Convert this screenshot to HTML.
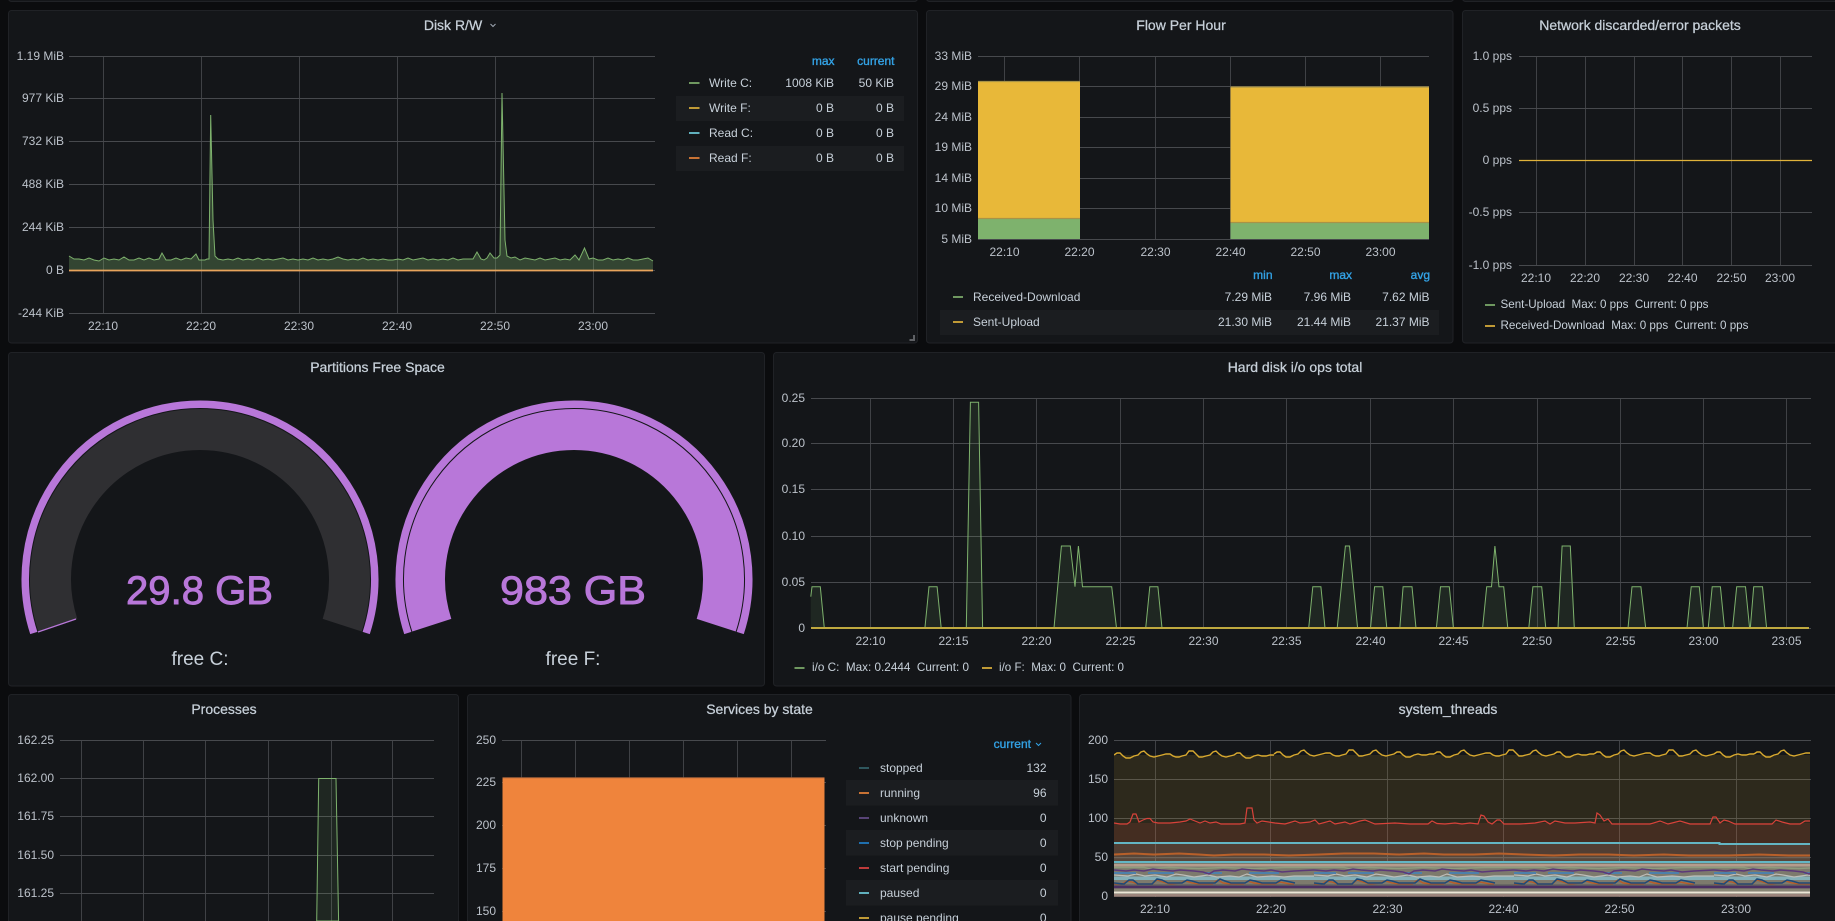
<!DOCTYPE html>
<html lang="en">
<head>
<meta charset="utf-8">
<title>Dashboard</title>
<style>
html,body{margin:0;padding:0;background:#0b0c0e;width:1835px;height:921px;overflow:hidden}
svg{display:block}
text{font-family:"Liberation Sans",sans-serif;font-size:12px;fill:#c7d0d9;white-space:pre}
.t{font-size:14px;text-anchor:middle;fill:#c7d0d9;stroke:#c7d0d9;stroke-width:.25}
.r{text-anchor:end}
.a{fill:#bcc2ca}
.ar{fill:#bcc2ca;text-anchor:end}
.m{fill:#bcc2ca;text-anchor:middle}
.h{fill:#33a2e5;text-anchor:end;stroke:#33a2e5;stroke-width:.35}
.p{fill:#141619;stroke:#202226;stroke-width:1}
.g{stroke:#47494d;stroke-width:1;fill:none}
.v{stroke:#3f4145;stroke-width:1;fill:none}
.big{font-size:40px;fill:#b877d9;text-anchor:middle;stroke:#b877d9;stroke-width:.9}
.lb{font-size:19px;fill:#c7d0d9;text-anchor:middle}
</style>
</head>
<body>
<svg width="1835" height="921" viewBox="0 0 1835 921" xmlns="http://www.w3.org/2000/svg">
<defs>
<clipPath id="tc"><rect x="1114" y="730" width="696" height="170"/></clipPath>
<path id="yw" d="M0 755l3-2 3 0 3 3 3 2 4 0 4-2 4-1l3-3 3-1 3 3 3 2 4 1 4-1 4-1l4-1 4 0 3 2 3 1 3 0 3-1 4-1l3-4 4 0 3 3 3 3 3 0 4-1 4-1l3-3 3-1 3 3 3 2 4 1 4-1 4-1l3-2 3 0 3 3 3 2 4 0 4-2 4-1l4 1 4 0 4-1 4 0" fill="none" stroke="#d8a92f" stroke-width="1.4"/>
<g id="mw" fill="none">
<path d="M0 867.5h30l5 1 20-1 30 1 25-1 30 1 30-1 30 0" stroke="#8f9c7c" stroke-width="1.5"/>
<path d="M0 875l14 1 8-2 9 2 10-1 12 2 9-3 7 1 11 2 14-2 9 2 13-1 9 1 8-3 10 3 15-1 12 1 10-1 20 0" stroke="#bdbdb8" stroke-width="1.2"/>
<path d="M0 873h22M34 873h26M90 873h18M135 873h30" stroke="#4d80aa" stroke-width="2"/>
<path d="M0 870l12 1 8-1 10 1 9-2 8 1 12 1 7-1 14 1 9 1 6 2 5-3 9-1 12 1 7-2 9 1 13 1 7-1 11 2 12-1 20-1" stroke="#5c3878" stroke-width="1.6"/>
<path d="M0 884l8 0 5-3 5 1 6 2 14 0 5-4 6 2 7 2 10-1 6-2 6 2 8 1 12 0 6-4 5 3 8 1 12 0 5-3 6 2 10 1 10 0 6-2 10 2 4 0" stroke="#b85c28" stroke-width="1.4"/>
<path d="M0 883l10 1 5-4 4 0 5 4 14 0 5-5 5 1 6 3 14 0 5-3 5 1 7 2 16 0 5-4 5 2 6 2 14 0 5-3 5 1 7 2 14 0 5-3 5 1 9 2" stroke="#1c4a7a" stroke-width="1.5"/>
<path d="M0 885h200" stroke="#55555a" stroke-width="1"/>
</g>
</defs>

<!-- top sliver panels -->
<rect class="p" x="8.5" y="-30" width="909" height="31.5" rx="3"/>
<rect class="p" x="926.5" y="-30" width="527" height="31.5" rx="3"/>
<rect class="p" x="1462.5" y="-30" width="381" height="31.5" rx="3"/>

<!-- Disk R/W -->
<rect class="p" x="8.5" y="10.5" width="909" height="332.5" rx="3"/>
<text class="t" x="453" y="30">Disk R/W</text>
<path d="M490.500 24l2.500 2.500 2.500-2.500" fill="none" stroke="#9fa7b3" stroke-width="1"/>
<path class="v" d="M103.500 56v257M201.500 56v257M299.500 56v257M397.500 56v257M495.500 56v257M593.500 56v257"/>
<path class="g" d="M69 56.500h586M69 98.500h586M69 141.500h586M69 184.500h586M69 227.500h586M69 270.500h586M69 313.500h586"/>
<path d="M69 256L74 259 79 259 84 260 89 258 94 260 99 261 104 258 109 260 114 259 119 260 124 257 129 260 134 260 139 258 144 260 149 258 154 260 159 259 162 253 166 260 171 260 176 258 181 260 186 258 191 259 196 254 199 260 205 260 207 259 209 259 210.700 115 213 220 215 256 218 259 223 260 228 259 233 260 238 258 243 260 248 259 253 260 258 258 263 260 268 259 273 260 278 259 283 258 288 260 293 259 298 260 303 259 308 260 313 258 318 260 323 259 328 260 333 259 338 257 343 259 348 260 353 259 358 260 363 258 368 260 373 259 378 260 383 259 388 260 393 260 398 259 403 260 408 258 413 260 418 259 423 258 428 260 433 259 438 260 443 259 448 260 453 258 458 260 463 259 468 259 473 259 477 252 481 259 484 260 487 258 490 253 494 258 497 258 500 255 502 93 505 240 507 256 511 258 515 257 520 260 525 258 530 259 535 260 540 258 545 260 550 259 555 258 560 260 565 259 570 260 575 255 579 260 584.500 248 589 259 593 258 598 260 603 260 608 258 613 260 618 259 623 260 628 258 633 260 638 260 643 259 648 258 653 261V270H69Z" fill="#7eb26d" fill-opacity=".3" stroke="none"/>
<path d="M69 256L74 259 79 259 84 260 89 258 94 260 99 261 104 258 109 260 114 259 119 260 124 257 129 260 134 260 139 258 144 260 149 258 154 260 159 259 162 253 166 260 171 260 176 258 181 260 186 258 191 259 196 254 199 260 205 260 207 259 209 259 210.700 115 213 220 215 256 218 259 223 260 228 259 233 260 238 258 243 260 248 259 253 260 258 258 263 260 268 259 273 260 278 259 283 258 288 260 293 259 298 260 303 259 308 260 313 258 318 260 323 259 328 260 333 259 338 257 343 259 348 260 353 259 358 260 363 258 368 260 373 259 378 260 383 259 388 260 393 260 398 259 403 260 408 258 413 260 418 259 423 258 428 260 433 259 438 260 443 259 448 260 453 258 458 260 463 259 468 259 473 259 477 252 481 259 484 260 487 258 490 253 494 258 497 258 500 255 502 93 505 240 507 256 511 258 515 257 520 260 525 258 530 259 535 260 540 258 545 260 550 259 555 258 560 260 565 259 570 260 575 255 579 260 584.500 248 589 259 593 258 598 260 603 260 608 258 613 260 618 259 623 260 628 258 633 260 638 260 643 259 648 258 653 261" fill="none" stroke="#7eb26d" stroke-width="1"/>
<path d="M69 270.500H653" stroke="#e8a45c" stroke-width="1.800"/>
<g>
<text class="ar" x="64" y="60">1.19 MiB</text><text class="ar" x="64" y="102">977 KiB</text><text class="ar" x="64" y="145">732 KiB</text><text class="ar" x="64" y="188">488 KiB</text><text class="ar" x="64" y="231">244 KiB</text><text class="ar" x="64" y="274">0 B</text><text class="ar" x="64" y="317">-244 KiB</text>
<text class="m" x="103" y="330">22:10</text><text class="m" x="201" y="330">22:20</text><text class="m" x="299" y="330">22:30</text><text class="m" x="397" y="330">22:40</text><text class="m" x="495" y="330">22:50</text><text class="m" x="593" y="330">23:00</text>
</g>
<rect x="676" y="96" width="228" height="25" fill="#1b1d20"/><rect x="676" y="146" width="228" height="25" fill="#1b1d20"/>
<text class="h" x="834.500" y="65">max</text><text class="h" x="894.500" y="65">current</text>
<rect x="689" y="82" width="10.500" height="2" fill="#6f9860"/><text x="709" y="87">Write C:</text><text class="r" x="834" y="87">1008 KiB</text><text class="r" x="894" y="87">50 KiB</text>
<rect x="689" y="107" width="10.500" height="2" fill="#c09a36"/><text x="709" y="112">Write F:</text><text class="r" x="834" y="112">0 B</text><text class="r" x="894" y="112">0 B</text>
<rect x="689" y="132" width="10.500" height="2" fill="#60b0bd"/><text x="709" y="137">Read C:</text><text class="r" x="834" y="137">0 B</text><text class="r" x="894" y="137">0 B</text>
<rect x="689" y="157" width="10.500" height="2" fill="#c87234"/><text x="709" y="162">Read F:</text><text class="r" x="834" y="162">0 B</text><text class="r" x="894" y="162">0 B</text>
<path d="M915 335v6h-5.500v-2h3.500v-4z" fill="#5f6165"/>

<!-- Flow Per Hour -->
<rect class="p" x="926.500" y="10.500" width="526.500" height="332.500" rx="3"/>
<text class="t" x="1181" y="30">Flow Per Hour</text>
<path class="v" d="M1004.500 56v183M1079.500 56v183M1155.500 56v183M1230.500 56v183M1305.500 56v183M1380.500 56v183"/>
<path class="g" d="M978 56.500h451M978 86.500h451M978 117.500h451M978 147.500h451M978 178.500h451M978 208.500h451M978 239.500h451"/>
<rect x="978" y="81" width="102" height="137.500" fill="#e8b839"/><rect x="978" y="218.500" width="102" height="20.500" fill="#7eb26d"/>
<path d="M978 81.500h102M978 218.500h102" stroke="#a89347" stroke-width="1.200"/>
<rect x="1230.500" y="86.500" width="198.500" height="136" fill="#e8b839"/><rect x="1230.500" y="222.500" width="198.500" height="16.500" fill="#7eb26d"/>
<path d="M1230.500 87h198.500M1230.500 222.500h198.500" stroke="#a89347" stroke-width="1.200"/>
<text class="ar" x="972" y="60">33 MiB</text><text class="ar" x="972" y="90">29 MiB</text><text class="ar" x="972" y="121">24 MiB</text><text class="ar" x="972" y="151">19 MiB</text><text class="ar" x="972" y="182">14 MiB</text><text class="ar" x="972" y="212">10 MiB</text><text class="ar" x="972" y="243">5 MiB</text>
<text class="m" x="1004.500" y="256">22:10</text><text class="m" x="1079.500" y="256">22:20</text><text class="m" x="1155.500" y="256">22:30</text><text class="m" x="1230.500" y="256">22:40</text><text class="m" x="1305.500" y="256">22:50</text><text class="m" x="1380.500" y="256">23:00</text>
<rect x="940" y="310" width="499" height="25" fill="#1b1d20"/>
<text class="h" x="1272.500" y="279">min</text><text class="h" x="1352" y="279">max</text><text class="h" x="1430" y="279">avg</text>
<rect x="953" y="296" width="10" height="2" fill="#6f9860"/><text x="973" y="301">Received-Download</text><text class="r" x="1272" y="301">7.29 MiB</text><text class="r" x="1351" y="301">7.96 MiB</text><text class="r" x="1429.500" y="301">7.62 MiB</text>
<rect x="953" y="321" width="10" height="2" fill="#c09a36"/><text x="973" y="326">Sent-Upload</text><text class="r" x="1272" y="326">21.30 MiB</text><text class="r" x="1351" y="326">21.44 MiB</text><text class="r" x="1429.500" y="326">21.37 MiB</text>

<!-- Network -->
<rect class="p" x="1462.500" y="10.500" width="381" height="332.500" rx="3"/>
<text class="t" x="1640" y="30">Network discarded/error packets</text>
<path class="v" d="M1536.500 56v209M1585.500 56v209M1634.500 56v209M1682.500 56v209M1731.500 56v209M1780.500 56v209"/>
<path class="g" d="M1519 56.500h293M1519 108.500h293M1519 212.500h293M1519 265.500h293"/>
<path d="M1519 160.500h293" stroke="#e0b23a" stroke-width="1.200"/>
<text class="ar" x="1512" y="60">1.0 pps</text><text class="ar" x="1512" y="112">0.5 pps</text><text class="ar" x="1512" y="164">0 pps</text><text class="ar" x="1512" y="216">-0.5 pps</text><text class="ar" x="1512" y="269">-1.0 pps</text>
<text class="m" x="1536" y="282">22:10</text><text class="m" x="1585" y="282">22:20</text><text class="m" x="1634" y="282">22:30</text><text class="m" x="1682.500" y="282">22:40</text><text class="m" x="1731.500" y="282">22:50</text><text class="m" x="1780" y="282">23:00</text>
<rect x="1485" y="304" width="10" height="2" fill="#6f9860"/><text x="1500.500" y="308" textLength="208" lengthAdjust="spacingAndGlyphs">Sent-Upload  Max: 0 pps  Current: 0 pps</text>
<rect x="1485" y="325" width="10" height="2" fill="#c09a36"/><text x="1500.500" y="329" textLength="248" lengthAdjust="spacingAndGlyphs">Received-Download  Max: 0 pps  Current: 0 pps</text>

<!-- Partitions -->
<rect class="p" x="8.500" y="352.500" width="756" height="333.500" rx="3"/>
<text class="t" x="377.500" y="372">Partitions Free Space</text>
<g fill="none">
<path d="M33.800 633A174.750 174.750 0 1 1 366.200 633" stroke="#b877d9" stroke-width="7.500"/>
<path d="M57.800 625.200A149.500 149.500 0 1 1 342.200 625.200" stroke="#2f2f32" stroke-width="41"/>
<path d="M38 632L76 619" stroke="#b877d9" stroke-width="1.200"/>
<path d="M407.800 633A174.750 174.750 0 1 1 740.200 633" stroke="#b877d9" stroke-width="7.500"/>
<path d="M431.800 625.200A149.500 149.500 0 1 1 716.200 625.200" stroke="#b877d9" stroke-width="41"/>
</g>
<text class="big" x="199.500" y="604" textLength="147" lengthAdjust="spacingAndGlyphs">29.8 GB</text>
<text class="big" x="573" y="604" textLength="146" lengthAdjust="spacingAndGlyphs">983 GB</text>
<text class="lb" x="200" y="665">free C:</text>
<text class="lb" x="573" y="665">free F:</text>

<!-- Hard disk -->
<rect class="p" x="773.500" y="352.500" width="1070" height="333.500" rx="3"/>
<text class="t" x="1295" y="372">Hard disk i/o ops total</text>
<path class="v" d="M870.500 398v230M953.500 398v230M1036.500 398v230M1120.500 398v230M1203.500 398v230M1286.500 398v230M1370.500 398v230M1453.500 398v230M1537.500 398v230M1620.500 398v230M1703.500 398v230M1786.500 398v230"/>
<path class="g" d="M811 398.500h1000M811 443.500h1000M811 489.500h1000M811 536.500h1000M811 582.500h1000M811 628.500h1000"/>
<path d="M810.800 596.700L812 586.700 820.300 586.700 824.300 628H924.900L929 586.700 937.100 586.700 941.200 628H966.300L970.400 402.300 978.600 402.300 982.600 628H1054L1061.400 546 1070.300 546 1075 586.700 1078.400 546 1082.500 586.700 1111.700 586.700 1116.500 628H1145.700L1149.800 586.700 1157.900 586.700 1162 628H1308.700L1312.800 586.700 1320.900 586.700 1325 628H1337.200L1345.400 546 1349.500 546 1357.600 628H1370.500L1374.600 586.700 1382.800 586.700 1386.800 628H1399.800L1403.100 586.700 1412 586.700 1416 628H1436.400L1440.500 586.700 1449.300 586.700 1453.400 628H1482.600L1486.700 586.700 1491.500 586.700 1494.900 546 1499 586.700 1503.700 586.700 1507.800 628H1528.800L1532.900 586.700 1541.700 586.700 1545.800 628H1558L1562.100 546 1570.300 546 1574.300 628H1628L1632 586.700 1640.900 586.700 1645.700 628H1687L1691.200 586.700 1699.300 586.700 1703.400 628H1708.200L1712.200 586.700 1720.400 586.700 1724.500 628H1732.600L1736.700 586.700 1745.500 586.700 1749.600 628H1750.300L1753.700 586.700 1762.500 586.700 1766.600 628H810.800Z" fill="#7eb26d" fill-opacity=".11"/>
<path d="M810.800 596.700L812 586.700 820.300 586.700 824.300 628H924.900L929 586.700 937.100 586.700 941.200 628H966.300L970.400 402.300 978.600 402.300 982.600 628H1054L1061.400 546 1070.300 546 1075 586.700 1078.400 546 1082.500 586.700 1111.700 586.700 1116.500 628H1145.700L1149.800 586.700 1157.900 586.700 1162 628H1308.700L1312.800 586.700 1320.900 586.700 1325 628H1337.200L1345.400 546 1349.500 546 1357.600 628H1370.500L1374.600 586.700 1382.800 586.700 1386.800 628H1399.800L1403.100 586.700 1412 586.700 1416 628H1436.400L1440.500 586.700 1449.300 586.700 1453.400 628H1482.600L1486.700 586.700 1491.500 586.700 1494.900 546 1499 586.700 1503.700 586.700 1507.800 628H1528.800L1532.900 586.700 1541.700 586.700 1545.800 628H1558L1562.100 546 1570.300 546 1574.300 628H1628L1632 586.700 1640.900 586.700 1645.700 628H1687L1691.200 586.700 1699.300 586.700 1703.400 628H1708.200L1712.200 586.700 1720.400 586.700 1724.500 628H1732.600L1736.700 586.700 1745.500 586.700 1749.600 628H1750.300L1753.700 586.700 1762.500 586.700 1766.600 628" fill="none" stroke="#7eb26d" stroke-width="1"/>
<path d="M811 628H1809" stroke="#bfa93f" stroke-width="2"/>
<text class="ar" x="805" y="402">0.25</text><text class="ar" x="805" y="447">0.20</text><text class="ar" x="805" y="493">0.15</text><text class="ar" x="805" y="540">0.10</text><text class="ar" x="805" y="586">0.05</text><text class="ar" x="805" y="632">0</text>
<text class="m" x="870.500" y="645">22:10</text><text class="m" x="953.500" y="645">22:15</text><text class="m" x="1036.500" y="645">22:20</text><text class="m" x="1120.500" y="645">22:25</text><text class="m" x="1203.500" y="645">22:30</text><text class="m" x="1286.500" y="645">22:35</text><text class="m" x="1370.500" y="645">22:40</text><text class="m" x="1453.500" y="645">22:45</text><text class="m" x="1537" y="645">22:50</text><text class="m" x="1620.500" y="645">22:55</text><text class="m" x="1703.500" y="645">23:00</text><text class="m" x="1786.500" y="645">23:05</text>
<rect x="794.500" y="667" width="10" height="2" fill="#6f9860"/><text x="812" y="671" textLength="157" lengthAdjust="spacingAndGlyphs">i/o C:  Max: 0.2444  Current: 0</text>
<rect x="982" y="667" width="10" height="2" fill="#c09a36"/><text x="999" y="671" textLength="125" lengthAdjust="spacingAndGlyphs">i/o F:  Max: 0  Current: 0</text>

<!-- Processes -->
<rect class="p" x="8.500" y="694.500" width="450" height="260" rx="3"/>
<text class="t" x="224" y="714">Processes</text>
<path class="v" d="M81.500 740v190M143.500 740v190M205.500 740v190M268.500 740v190M331.500 740v190M392.500 740v190"/>
<path class="g" d="M60 740.500h374M60 778.500h374M60 816.500h374M60 855.500h374M60 893.500h374"/>
<path d="M316.700 921L318.700 778.500H336L338.600 921Z" fill="#7eb26d" fill-opacity=".11" stroke="#7eb26d" stroke-width="1"/>
<text class="ar" x="54" y="744">162.25</text><text class="ar" x="54" y="782">162.00</text><text class="ar" x="54" y="820">161.75</text><text class="ar" x="54" y="859">161.50</text><text class="ar" x="54" y="897">161.25</text>

<!-- Services -->
<rect class="p" x="467.500" y="694.500" width="603.500" height="260" rx="3"/>
<text class="t" x="759.500" y="714">Services by state</text>
<path class="v" d="M521.500 740v40M575.500 740v40M629.500 740v40M683.500 740v40M737.500 740v40M791.500 740v40"/>
<path class="g" d="M502 740.500h324M502 782.500h324M502 825.500h324M502 868.500h324M502 911.500h324"/>
<rect x="502.500" y="777.500" width="322" height="150" fill="#ef843c"/>
<path d="M502.500 777.800h322" stroke="#a8633a" stroke-width="1"/>
<text class="ar" x="496" y="744">250</text><text class="ar" x="496" y="786">225</text><text class="ar" x="496" y="829">200</text><text class="ar" x="496" y="872">175</text><text class="ar" x="496" y="915">150</text>
<rect x="846" y="780" width="212" height="25.500" fill="#1b1d20"/><rect x="846" y="830" width="212" height="25.500" fill="#1b1d20"/><rect x="846" y="880" width="212" height="25.500" fill="#1b1d20"/>
<text class="h" x="1031" y="748">current</text>
<path d="M1036 743l2.500 2.500 2.500-2.500" fill="none" stroke="#33a2e5" stroke-width="1"/>
<rect x="859" y="767" width="10" height="2" fill="#2f575e"/><text x="880" y="772">stopped</text><text class="r" x="1046.500" y="772">132</text>
<rect x="859" y="792" width="10" height="2" fill="#c87234"/><text x="880" y="797">running</text><text class="r" x="1046.500" y="797">96</text>
<rect x="859" y="817" width="10" height="2" fill="#584477"/><text x="880" y="822">unknown</text><text class="r" x="1046.500" y="822">0</text>
<rect x="859" y="842" width="10" height="2" fill="#1f6fae"/><text x="880" y="847">stop pending</text><text class="r" x="1046.500" y="847">0</text>
<rect x="859" y="867" width="10" height="2" fill="#bf3b3b"/><text x="880" y="872">start pending</text><text class="r" x="1046.500" y="872">0</text>
<rect x="859" y="892" width="10" height="2" fill="#60b0bd"/><text x="880" y="897">paused</text><text class="r" x="1046.500" y="897">0</text>
<rect x="859" y="917" width="10" height="2" fill="#c09a36"/><text x="880" y="922">pause pending</text><text class="r" x="1046.500" y="922">0</text>

<!-- system_threads -->
<rect class="p" x="1079.500" y="694.500" width="770" height="260" rx="3"/>
<text class="t" x="1448" y="714">system_threads</text>
<path class="v" d="M1155.500 740v157M1270.500 740v157M1387.500 740v157M1503.500 740v157M1619.500 740v157M1736.500 740v157"/>
<path class="g" d="M1114 740.500h697M1114 779.500h697M1114 818.500h697M1114 857.500h697"/>
<rect x="1114" y="755" width="696" height="141.500" fill="#eab839" fill-opacity=".12"/>
<rect x="1114" y="823" width="696" height="73.500" fill="#e24d42" fill-opacity=".13"/>
<rect x="1114" y="843" width="696" height="53.500" fill="#c8d8d8" fill-opacity=".1"/>
<rect x="1114" y="854" width="696" height="42.500" fill="#c8c8b0" fill-opacity=".06"/>
<rect x="1114" y="862" width="696" height="34.500" fill="#7d7a6d"/>
<g clip-path="url(#tc)">
<use href="#yw" x="1114" y="0"/><use href="#yw" x="1274" y="-1"/><use href="#yw" x="1434" y="-1"/><use href="#yw" x="1594" y="-1"/><use href="#yw" x="1754" y="-1"/>
<path d="M1114 823L1120 824 1127 824 1130 822 1133 814 1136 814 1139 822 1143 820 1147 818.500 1150 818.500 1153 822 1158 823 1170 823 1180 822 1186 821 1190 819 1195 821 1200 823 1205 821 1210 823 1216 822 1221 824 1228 824 1240 824 1245 823 1247 808 1252 808 1254 820 1257 823 1262 821 1275 823 1285 824 1295 821 1300 823 1310 822 1315 820 1319 824 1330 821 1335 824 1345 822 1350 824 1360 821 1365 820 1375 824 1395 823 1410 824 1428 824 1432 821 1437 823.500 1445 824 1455 823 1462 824 1470 823 1478 824 1481 815 1484 816 1488 822 1492 824 1497 820 1500 820 1504 824 1520 824 1535 823 1545 821 1550 824 1555 821 1565 823 1575 823 1590 822 1595 823 1597 813 1600 815 1604 821 1608 819 1612 824 1630 824 1650 824 1660 821 1668 824 1680 821 1690 824 1710 824 1713 817 1716 817 1720 823 1724 820 1728 821 1735 824 1755 824 1772 824 1776 820 1782 822 1790 824 1800 824 1805 821 1810 821" fill="none" stroke="#d8423a" stroke-width="1.200"/>
<path d="M1114 843H1719.500V844H1810" fill="none" stroke="#63b6c4" stroke-width="2"/>
<path d="M1114 854.500l20-1 20 1 25-1 20 1 15 1 20-1 30 0 25 1 30-1 25-1 30 0 25 1 25-1 20 1 30 0 25-1 25 1 30 1 25-1 30 0 25 1 30-1 25 1 40 0 30-1 30 1 21 0" fill="none" stroke="#b8602a" stroke-width="2"/>
<path d="M1114 857.800H1810" stroke="#6b6258" stroke-width="1"/>
<path d="M1114 862H1810" stroke="#63b6c4" stroke-width="2"/>
<rect x="1114" y="864" width="696" height="2.500" fill="#b59c8c"/>
<rect x="1114" y="876.500" width="696" height="3.500" fill="#84b0b8"/>
<use href="#mw" x="1114"/><use href="#mw" x="1314"/><use href="#mw" x="1514"/><use href="#mw" x="1714"/>
<path d="M1114 887H1810" stroke="#4b2f62" stroke-width="2.500"/>
<path d="M1114 890H1810" stroke="#8b8a78" stroke-width="1.500"/>
<path d="M1114 892.500H1810" stroke="#ede6d6" stroke-width="2"/>
<rect x="1114" y="894" width="696" height="2.800" fill="#9c857c"/>
</g>
<text class="ar" x="1108" y="744">200</text><text class="ar" x="1108" y="783">150</text><text class="ar" x="1108" y="822">100</text><text class="ar" x="1108" y="861">50</text><text class="ar" x="1108" y="900">0</text>
<text class="m" x="1155" y="913">22:10</text><text class="m" x="1271" y="913">22:20</text><text class="m" x="1387.500" y="913">22:30</text><text class="m" x="1503.500" y="913">22:40</text><text class="m" x="1619.500" y="913">22:50</text><text class="m" x="1736" y="913">23:00</text>
</svg>
</body>
</html>
